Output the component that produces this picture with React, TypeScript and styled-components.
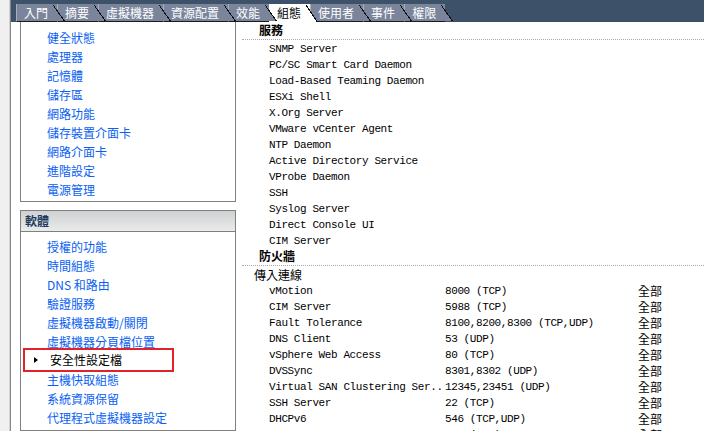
import styled, { createGlobalStyle } from 'styled-components';

const GlobalStyle = createGlobalStyle`
  html, body {
    margin: 0;
    padding: 0;
    background: #fff;
  }
  body {
    font-family: 'Noto Sans CJK TC', 'Liberation Sans', sans-serif;
    font-size: 12px;
    color: #000;
  }
`;

const TAB_FILL = '#7a859c';

const Page = styled.div`
  display: flex;
  width: 704px;
  height: 431px;
  overflow: hidden;
  background: #fff;
`;

const Gutter = styled.div`
  flex: 0 0 11px;
  background: linear-gradient(
    to right,
    #f0f0f0 0 9px,
    #d2d2d2 9px 10px,
    #888 10px 11px
  );
`;

const Main = styled.div`
  flex: 1;
  min-width: 0;
  display: flex;
  flex-direction: column;
`;

const TabBar = styled.div`
  flex: 0 0 22px;
  display: flex;
  align-items: flex-end;
  padding-left: 5px;
  background: #3d5169;
`;

const Tab = styled.div<{ $active?: boolean; $z: number }>`
  position: relative;
  z-index: ${({ $z }) => $z};
  height: 18px;
  box-sizing: border-box;
  padding: 0 9px 0 7px;
  background: ${({ $active }) => ($active ? '#fff' : TAB_FILL)};
  color: ${({ $active }) => ($active ? '#000' : '#fff')};
  border-left: 1px solid ${({ $active }) => ($active ? '#fff' : '#a6afc0')};
  border-bottom: 1px solid ${({ $active }) => ($active ? '#fff' : '#1b1b1b')};
  font-size: 12px;
  line-height: 17px;
  white-space: nowrap;

  &::after {
    content: '';
    position: absolute;
    top: 0;
    bottom: ${({ $active }) => ($active ? '-1px' : '0')};
    left: calc(100% - 4px);
    width: 12px;
    background: linear-gradient(
      to top right,
      ${({ $active }) => ($active ? '#fff' : TAB_FILL)} calc(50% - 1px),
      #111 calc(50% - 1px),
      #111 50%,
      transparent 50%
    );
  }
`;

const Body = styled.div`
  flex: 1;
  min-height: 0;
  display: flex;
  overflow: hidden;
`;

const Sidebar = styled.div`
  flex: 0 0 216px;
  padding-left: 9px;
  display: flex;
  flex-direction: column;
  gap: 8px;
`;

const NavBox = styled.div<{ $open?: boolean }>`
  border: 1px solid #808080;
  border-top: ${({ $open }) => ($open ? 'none' : '1px solid #808080')};
  flex: ${({ $open }) => ($open ? '0 0 auto' : '1 0 auto')};
  display: flex;
  flex-direction: column;
`;

const NavHeader = styled.div`
  height: 20px;
  line-height: 20px;
  padding-left: 4px;
  border-bottom: 1px solid #808080;
  background: linear-gradient(to bottom, #cfd1d2, #eaebeb);
  color: #1c3a5e;
  font-weight: bold;
  font-size: 12px;
`;

const NavList = styled.div<{ $top: number }>`
  display: flex;
  flex-direction: column;
  padding: ${({ $top }) => $top}px 0 2px 0;
`;

const NavLink = styled.div`
  height: 19px;
  line-height: 19px;
  padding-left: 26px;
  color: #0a5ff2;
  font-size: 12px;
  white-space: nowrap;
`;

const NavSelected = styled.div`
  display: flex;
  align-items: center;
  gap: 12px;
  width: 151px;
  height: 24px;
  box-sizing: border-box;
  margin: -3px 0 -2px 2px;
  padding-left: 6px;
  border: 2px solid #e3212b;
  font-size: 12px;
  line-height: 20px;
  color: #000;
  white-space: nowrap;
`;

const Arrow = styled.span`
  width: 0;
  height: 0;
  margin-left: 3px;
  border-top: 3px solid transparent;
  border-bottom: 3px solid transparent;
  border-left: 4px solid #000;
`;

const Content = styled.div`
  flex: 1;
  min-width: 0;
  margin-left: 6px;
  display: flex;
  flex-direction: column;
`;

const Heading = styled.div`
  height: 18px;
  box-sizing: border-box;
  line-height: 16px;
  padding: 0 0 1px 17px;
  border-bottom: 1px dotted #a8a8a8;
  font-weight: bold;
  font-size: 12px;
`;

const SubHeading = styled.div`
  height: 17px;
  line-height: 17px;
  padding-left: 12px;
  font-size: 12px;
`;

const Mono = styled.span`
  font-family: 'Liberation Mono', 'DejaVu Sans Mono', monospace;
  font-size: 11px;
  letter-spacing: -0.4px;
  white-space: pre;
`;

const ServiceRow = styled.div`
  height: 16px;
  box-sizing: border-box;
  line-height: 13px;
  padding: 0 0 3px 27px;
`;

const RuleRow = styled.div`
  display: grid;
  grid-template-columns: 176px 193px auto;
  height: 16px;
  line-height: 16px;
  padding-left: 27px;
`;

const Scope = styled.span`
  font-size: 12px;
`;

const tabs = ['入門', '摘要', '虛擬機器', '資源配置', '效能', '組態', '使用者', '事件', '權限'];

const hardware = [
  '健全狀態',
  '處理器',
  '記憶體',
  '儲存區',
  '網路功能',
  '儲存裝置介面卡',
  '網路介面卡',
  '進階設定',
  '電源管理',
];

const software = [
  '授權的功能',
  '時間組態',
  'DNS 和路由',
  '驗證服務',
  '虛擬機器啟動/關閉',
  '虛擬機器分頁檔位置',
  '安全性設定檔',
  '主機快取組態',
  '系統資源保留',
  '代理程式虛擬機器設定',
];

const services = [
  'SNMP Server',
  'PC/SC Smart Card Daemon',
  'Load-Based Teaming Daemon',
  'ESXi Shell',
  'X.Org Server',
  'VMware vCenter Agent',
  'NTP Daemon',
  'Active Directory Service',
  'VProbe Daemon',
  'SSH',
  'Syslog Server',
  'Direct Console UI',
  'CIM Server',
];

const rules = [
  ['vMotion', '8000 (TCP)'],
  ['CIM Server', '5988 (TCP)'],
  ['Fault Tolerance', '8100,8200,8300 (TCP,UDP)'],
  ['DNS Client', '53 (UDP)'],
  ['vSphere Web Access', '80 (TCP)'],
  ['DVSSync', '8301,8302 (UDP)'],
  ['Virtual SAN Clustering Ser..', '12345,23451 (UDP)'],
  ['SSH Server', '22 (TCP)'],
  ['DHCPv6', '546 (TCP,UDP)'],
  ['NFC', '902 (TCP)'],
];

export default function App() {
  return (
    <>
      <GlobalStyle />
      <Page>
        <Gutter />
        <Main>
          <TabBar>
            {tabs.map((t, i) => (
              <Tab key={t} $z={20 - i} $active={t === '組態'}>
                {t}
              </Tab>
            ))}
          </TabBar>
          <Body>
            <Sidebar>
              <NavBox $open>
                <NavList $top={6}>
                  {hardware.map((h) => (
                    <NavLink key={h}>{h}</NavLink>
                  ))}
                </NavList>
              </NavBox>
              <NavBox>
                <NavHeader>軟體</NavHeader>
                <NavList $top={5}>
                  {software.map((s) =>
                    s === '安全性設定檔' ? (
                      <NavSelected key={s}>
                        <Arrow />
                        {s}
                      </NavSelected>
                    ) : (
                      <NavLink key={s}>{s}</NavLink>
                    ),
                  )}
                </NavList>
              </NavBox>
            </Sidebar>
            <Content>
              <Heading>服務</Heading>
              {services.map((s) => (
                <ServiceRow key={s}>
                  <Mono>{s}</Mono>
                </ServiceRow>
              ))}
              <Heading>防火牆</Heading>
              <SubHeading>傳入連線</SubHeading>
              {rules.map(([name, port]) => (
                <RuleRow key={name}>
                  <Mono>{name}</Mono>
                  <Mono>{port}</Mono>
                  <Scope>全部</Scope>
                </RuleRow>
              ))}
            </Content>
          </Body>
        </Main>
      </Page>
    </>
  );
}
